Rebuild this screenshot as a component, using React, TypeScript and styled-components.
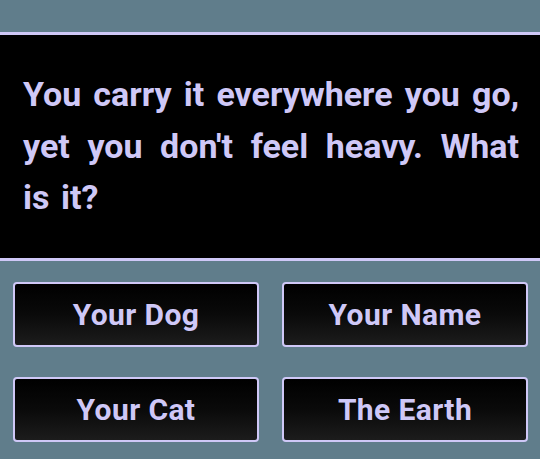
import React from "react";
import styled, { createGlobalStyle } from "styled-components";

const LAV = "#cfc8f7";

const Global = createGlobalStyle`
  html, body { margin: 0; padding: 0; background: #607d8b; }
  body { font-family: Roboto, "Liberation Sans", sans-serif; }
`;

const Page = styled.div`
  width: 540px;
  height: 459px;
  background: #607d8b;
  padding-top: 32px;
  box-sizing: border-box;
  display: flex;
  flex-direction: column;
`;

const QuestionPanel = styled.div`
  height: 229px;
  box-sizing: border-box;
  background: #000;
  border-top: 3px solid ${LAV};
  border-bottom: 3px solid ${LAV};
  display: flex;
  align-items: center;
  padding: 0 21px 0 23px;
`;

const Question = styled.p`
  margin: 0;
  color: ${LAV};
  font-size: 34px;
  font-weight: 700;
  letter-spacing: 0;
  word-spacing: 3px;
  line-height: 51.5px;
  text-align: justify;
`;

const Answers = styled.div`
  display: grid;
  grid-template-columns: 1fr 1fr;
  column-gap: 23px;
  row-gap: 30px;
  padding: 21px 12px 0 13px;
`;

const AnswerButton = styled.button`
  height: 65px;
  box-sizing: border-box;
  border: 2px solid ${LAV};
  border-radius: 4px;
  background: linear-gradient(to bottom, #000 0%, #0a0a0a 50%, #1c1c1c 100%);
  color: ${LAV};
  font-family: Roboto, "Liberation Sans", sans-serif;
  font-size: 30px;
  font-weight: 700;
  letter-spacing: 0.4px;
  padding: 0;
  cursor: pointer;
  display: flex;
  align-items: center;
  justify-content: center;
`;

const answers = ["Your Dog", "Your Name", "Your Cat", "The Earth"];

export default function App() {
  return (
    <>
      <Global />
      <Page>
        <QuestionPanel>
          <Question>
            You carry it everywhere you go, yet you don't feel heavy. What is it?
          </Question>
        </QuestionPanel>
        <Answers>
          {answers.map((a) => (
            <AnswerButton key={a}>{a}</AnswerButton>
          ))}
        </Answers>
      </Page>
    </>
  );
}
